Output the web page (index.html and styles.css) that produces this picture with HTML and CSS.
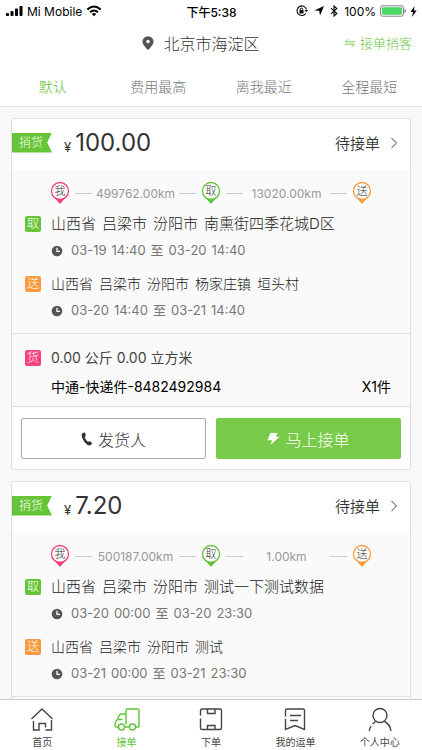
FILE: index.html
```html
<!DOCTYPE html>
<html lang="zh-CN">
<head>
<meta charset="utf-8">
<meta name="viewport" content="width=device-width, initial-scale=1">
<title>接单</title>
<link rel="stylesheet" href="styles.css">
</head>
<body>
<svg class="defs" aria-hidden="true">
  <symbol id="pin" viewBox="0 0 20 24"><circle cx="10" cy="10" r="8.500" fill="#fff" stroke="currentColor" stroke-width="1.300"/><path d="M3.500 15.500Q10 20.500 16.500 15.500L10.700 22.300Q10 23 9.300 22.300z" fill="currentColor"/></symbol>
  <symbol id="clock" viewBox="0 0 12 12"><circle cx="6" cy="6" r="5.300" fill="#555"/><path d="M6 2.800V6.300H9" fill="none" stroke="#fff" stroke-width="1.300"/></symbol>
  <symbol id="chevron" viewBox="0 0 8 12"><path d="M1.500 1L6.500 6L1.500 11" fill="none" stroke="#888" stroke-width="1.100"/></symbol>
  <symbol id="phone" viewBox="0 0 12 14"><path d="M1 1.500L3.200.5Q3.900.4 4.200 1.200L4.800 3.300Q4.900 4 3.700 4.900Q4.300 7.700 7 9.700Q8.200 8.900 8.900 9.300L10.800 10.700Q11.400 11.300 10.800 12L9.300 13.300Q6.600 14 3.400 9.900Q-.3 4.800 1 1.500z" fill="#333"/></symbol>
  <symbol id="bolt" viewBox="0 0 13 14"><path d="M3.500 1H10.500L8.800 4.800H12.600L3.400 13L5.200 8.300H.5z" fill="#fff"/></symbol>
</svg>
<div class="app">
  <div class="status">
    <div class="status-side">
      <svg width="17" height="12" viewBox="0 0 17 12"><g fill="#000"><rect x="0" y="8" width="3" height="3" rx=".8"/><rect x="4.500" y="6" width="3" height="5" rx=".8"/><rect x="9" y="3.500" width="3" height="7.500" rx=".8"/><rect x="13.500" y="1" width="3" height="10" rx=".8"/></g></svg>
      <span>Mi Mobile</span>
      <svg width="16" height="12" viewBox="0 0 16 12"><g fill="none" stroke="#000" stroke-width="2"><path d="M1.300 4.600Q8-1.500 14.700 4.600"/><path d="M4 7.300Q8 3.700 12 7.300"/></g><path d="M5.800 9Q8 7.200 10.200 9L8 11.300z"/></svg>
    </div>
    <span class="status-time">下午5:38</span>
    <div class="status-side status-right">
      <svg width="12" height="12" viewBox="0 0 12 12"><path d="M9.800 8.500A4.800 4.800 0 1 1 10.500 4.500" fill="none" stroke="#000" stroke-width="1.100"/><path d="M8.500 5H12L10.300 7.300z"/><rect x="3.500" y="5.200" width="4" height="3.200"/><path d="M4.300 5.500V4.300a1.200 1.200 0 0 1 2.400 0v1.200" fill="none" stroke="#000"/></svg>
      <svg class="gap-left" width="10" height="10" viewBox="0 0 10 10"><path d="M10 0L6 9.500L5.200 4.800L.3 4.400z"/></svg>
      <svg class="gap-left" width="8" height="12" viewBox="0 0 8 12"><path d="M1 3.200L6.800 8.500L4 11V1L6.800 3.500L1 8.800" fill="none" stroke="#000" stroke-width="1.100"/></svg>
      <span class="gap-left">100%</span>
      <svg width="26" height="12" viewBox="0 0 26 12"><rect x=".5" y=".8" width="23" height="10.400" rx="2" fill="#fff" stroke="#666" stroke-width=".8"/><rect x="2" y="2.200" width="20" height="7.600" rx="1" fill="#4cd964"/><path d="M24.500 4v4q1.300-.5 1.300-2t-1.300-2" fill="#666"/></svg>
      <svg width="7" height="11" viewBox="0 0 7 11"><path d="M4.500 0L.5 6H3L2 11L6.700 4.500H4z"/></svg>
    </div>
  </div>

  <header class="header">
    <h1 class="place"><svg width="12" height="14" viewBox="0 0 12 14"><path d="M6 14Q.5 8.800.5 5.700a5.500 5.500 0 0 1 11 0Q11.500 8.800 6 14z" fill="#555"/><circle cx="6" cy="5.500" r="1.700" fill="#fff"/></svg>北京市海淀区</h1>
    <a class="switch" href="#"><svg width="12" height="10" viewBox="0 0 12 10"><path d="M11 3.800H1.500L4.500 1M.8 6.200H10.500L7.500 9" fill="none" stroke="#6ac845" stroke-width=".9"/></svg>接单捎客</a>
  </header>

  <nav class="tabs">
    <button class="tab tab-active" type="button">默认</button>
    <button class="tab" type="button">费用最高</button>
    <button class="tab" type="button">离我最近</button>
    <button class="tab" type="button">全程最短</button>
  </nav>

  <main class="list">
    <article class="card">
      <div class="card-head">
        <span class="ribbon">捎货</span>
        <span class="yen">¥</span><span class="price">100.00</span>
        <a class="state" href="#">待接单<svg width="8" height="12"><use href="#chevron"/></svg></a>
      </div>
      <div class="trip">
        <div class="route">
          <svg class="pin pink" viewBox="0 0 20 24"><use href="#pin"/><text x="10" y="14">我</text></svg>
          <span class="leg">499762.00km</span>
          <svg class="pin green" viewBox="0 0 20 24"><use href="#pin"/><text x="10" y="14">取</text></svg>
          <span class="leg">13020.00km</span>
          <svg class="pin orange" viewBox="0 0 20 24"><use href="#pin"/><text x="10" y="14">送</text></svg>
        </div>
        <div class="stop">
          <span class="tag tag-green">取</span>
          <p class="address address-main"><span>山西省</span> <span>吕梁市</span> <span>汾阳市</span> <span>南熏街四季花城D区</span></p>
          <p class="time"><svg width="12" height="12"><use href="#clock"/></svg><span>03-19</span> <span>14:40</span> <span>至</span> <span>03-20</span> <span>14:40</span></p>
        </div>
        <div class="stop">
          <span class="tag tag-orange">送</span>
          <p class="address"><span>山西省</span> <span>吕梁市</span> <span>汾阳市</span> <span>杨家庄镇</span> <span>垣头村</span></p>
          <p class="time"><svg width="12" height="12"><use href="#clock"/></svg><span>03-20</span> <span>14:40</span> <span>至</span> <span>03-21</span> <span>14:40</span></p>
        </div>
      </div>
      <div class="goods">
        <span class="tag tag-pink">货</span>
        <p class="weight">0.00 公斤 0.00 立方米</p>
        <p class="parcel"><span>中通-快递件-8482492984</span><span>X1件</span></p>
      </div>
      <div class="actions">
        <button class="btn" type="button"><svg width="12" height="14"><use href="#phone"/></svg>发货人</button>
        <button class="btn btn-primary" type="button"><svg width="13" height="14"><use href="#bolt"/></svg>马上接单</button>
      </div>
    </article>

    <article class="card">
      <div class="card-head">
        <span class="ribbon">捎货</span>
        <span class="yen">¥</span><span class="price">7.20</span>
        <a class="state" href="#">待接单<svg width="8" height="12"><use href="#chevron"/></svg></a>
      </div>
      <div class="trip">
        <div class="route">
          <svg class="pin pink" viewBox="0 0 20 24"><use href="#pin"/><text x="10" y="14">我</text></svg>
          <span class="leg">500187.00km</span>
          <svg class="pin green" viewBox="0 0 20 24"><use href="#pin"/><text x="10" y="14">取</text></svg>
          <span class="leg">1.00km</span>
          <svg class="pin orange" viewBox="0 0 20 24"><use href="#pin"/><text x="10" y="14">送</text></svg>
        </div>
        <div class="stop">
          <span class="tag tag-green">取</span>
          <p class="address address-main"><span>山西省</span> <span>吕梁市</span> <span>汾阳市</span> <span>测试一下测试数据</span></p>
          <p class="time"><svg width="12" height="12"><use href="#clock"/></svg><span>03-20</span> <span>00:00</span> <span>至</span> <span>03-20</span> <span>23:30</span></p>
        </div>
        <div class="stop">
          <span class="tag tag-orange">送</span>
          <p class="address"><span>山西省</span> <span>吕梁市</span> <span>汾阳市</span> <span>测试</span></p>
          <p class="time"><svg width="12" height="12"><use href="#clock"/></svg><span>03-21</span> <span>00:00</span> <span>至</span> <span>03-21</span> <span>23:30</span></p>
        </div>
      </div>
      <div class="goods"></div>
    </article>
  </main>

  <nav class="bottom">
    <a href="#"><svg width="26" height="26" viewBox="0 0 26 26"><path d="M2.500 13L13 3L23.500 13M4.500 15V24H10V17.500H16.500V21.500M16.500 24H22.500V14"/></svg>首页</a>
    <a class="current" href="#"><svg width="26" height="26" viewBox="0 0 26 26"><path d="M12 18.500V4.500Q12 3 13.500 3H23.500Q25 3 25 4.500V19.500Q25 21 23.500 21H21.500M12 8H7.500Q6 8 5 10L3.500 13M8.500 13.500H3.500Q1 15.500 1 18V19.500Q1 21 2.500 21H4.500M10.500 21H15.500"/><circle cx="7.500" cy="21" r="3"/><circle cx="18.500" cy="21" r="3"/></svg>接单</a>
    <a href="#"><svg width="26" height="26" viewBox="0 0 26 26"><path d="M2.500 9.500V4.500Q2.500 3 4 3H22Q23.500 3 23.500 4.500V22Q23.500 23.500 22 23.500H4Q2.500 23.500 2.500 22V12.500M9.500 3V7.500H17V3M9.500 23.500V19.500H17V23.500"/></svg>下单</a>
    <a href="#"><svg width="26" height="26" viewBox="0 0 26 26"><path d="M3.500 10.500V4.500Q3.500 3 5 3H21Q22.500 3 22.500 4.500V23.500L13 19.500L3.500 23.500V13M8 9.500H19M8 14.500H16"/></svg>我的运单</a>
    <a href="#"><svg width="26" height="26" viewBox="0 0 26 26"><circle cx="13" cy="9.500" r="7"/><path d="M17.500 15.500Q23 18 24 25M8.500 15.500L5.500 18M4 20Q2.500 22.500 2.300 25"/></svg>个人中心</a>
  </nav>
</div>
</body>
</html>
```

FILE: styles.css
```css
* { box-sizing: border-box; }

body {
  margin: 0;
  background: #f8f8f8;
  color: #333;
  font-family: Inter, "Noto Sans CJK SC", sans-serif;
  font-size: 14px;
  font-weight: 300;
}

h1, p { margin: 0; font-weight: inherit; }
a { color: inherit; text-decoration: none; }
button { font: inherit; color: inherit; border: 0; padding: 0; background: none; }
svg { flex: none; }

.defs { position: absolute; width: 0; height: 0; }

.app { display: flex; flex-direction: column; height: 100vh; }

.status {
  display: grid;
  grid-template-columns: 1fr auto 1fr;
  align-items: center;
  height: 20px;
  padding: 2px 5px 0 6px;
  background: #fff;
  color: #000;
  font-size: 12px;
  font-weight: 400;
}
.status-side { display: flex; align-items: center; gap: 4px; }
.status-right { justify-content: flex-end; }
.gap-left { margin-left: 2px; }
.status-time { font-weight: 500; }

.header {
  display: grid;
  grid-template-columns: 1fr auto 1fr;
  align-items: center;
  height: 45px;
  padding: 0 10px;
  background: #fff;
}
.place { display: flex; grid-column: 2; align-items: center; gap: 9px; margin-right: 20px; font-size: 16px; }
.switch { display: flex; align-items: center; justify-self: end; gap: 4px; color: #6ac845; font-size: 13px; }

.tabs {
  display: grid;
  grid-template-columns: repeat(4, 1fr);
  height: 42px;
  border-bottom: 1px solid #e6e6e6;
  background: #fff;
}
.tab { color: #777; }
.tab-active { color: #5fc436; }

.list {
  display: flex;
  flex: 1;
  flex-direction: column;
  gap: 11px;
  min-height: 0;
  padding: 11px;
  overflow-y: auto;
  scrollbar-width: none;
}

.card { flex: none; border: 1px solid #dfdfdf; border-radius: 3px; background: #fff; }
.card-head { display: flex; align-items: center; height: 51px; padding: 0 12px 4px 0; }
.ribbon {
  width: 40px;
  padding-left: 7px;
  background: #66c536;
  clip-path: polygon(0 0, 100% 0, 88% 50%, 100% 100%, 0 100%);
  color: #fff;
  font-size: 12px;
  line-height: 20px;
}
.yen { margin: 8px 4px 0 12px; font-size: 13px; font-weight: 400; }
.price { font-size: 24px; font-weight: 400; }
.state { display: flex; align-items: center; gap: 10px; margin-left: auto; font-size: 15px; font-weight: 350; }

.trip { padding: 11px 13px 9px; border-bottom: 1px solid #dfdfdf; background: #fafafa; }
.route { display: flex; align-items: center; margin: 0 25px 5px; }
.pin { width: 20px; height: 24px; }
.pin text { fill: #333; font-size: 11px; text-anchor: middle; }
.pink { color: #f33f79; }
.green { color: #5fc436; }
.orange { color: #f99a3e; }
.leg { display: flex; flex: 1; align-items: center; justify-content: space-between; margin: 0 5px; color: #999; font-size: 12px; font-weight: 400; }
.leg::before, .leg::after { content: ""; width: 17px; height: 1px; background: #ccc; }

.stop, .goods { display: grid; grid-template-columns: 16px 1fr; column-gap: 10px; align-items: center; }
.stop + .stop { margin-top: 6px; }
.tag { border-radius: 2px; color: #fff; font-size: 12px; line-height: 16px; text-align: center; }
.tag-green { background: #66c536; }
.tag-orange { background: #f99a3e; }
.tag-pink { background: #f8417d; }
.address, .time { display: flex; line-height: 27px; }
.weight, .parcel { line-height: 29px; font-weight: 400; }
.weight { color: #444; }
.address { gap: 6px; color: #222; }
.address-main { font-size: 15px; }
.time { grid-column: 2; align-items: center; gap: 5px; color: #777; font-size: 13px; font-weight: 400; }
.time svg { margin-right: 3px; }

.goods { min-height: 73px; padding: 9px 19px 5px 13px; border-bottom: 1px solid #dfdfdf; background: #fafafa; }
.parcel { display: flex; grid-column: 2; justify-content: space-between; color: #000; }

.actions { display: grid; grid-template-columns: 1fr 1fr; gap: 10px; padding: 11px 9px 10px; }
.btn {
  display: flex;
  align-items: center;
  justify-content: center;
  gap: 5px;
  height: 41px;
  border: 1px solid #aaa;
  border-radius: 2px;
  background: #fff;
  font-size: 16px;
}
.btn-primary { border-color: #77cb48; background: #77cb48; color: #fff; }

.bottom {
  display: grid;
  grid-template-columns: repeat(5, 1fr);
  height: 51px;
  border-top: 1px solid #ccc;
  background: #fff;
}
.bottom a { display: flex; flex-direction: column; align-items: center; padding-top: 6px; color: #444; font-size: 10px; font-weight: 400; line-height: 20px; }
.bottom svg { fill: none; stroke: currentColor; stroke-width: 1.400; }
.bottom .current { color: #5fc436; }
```
